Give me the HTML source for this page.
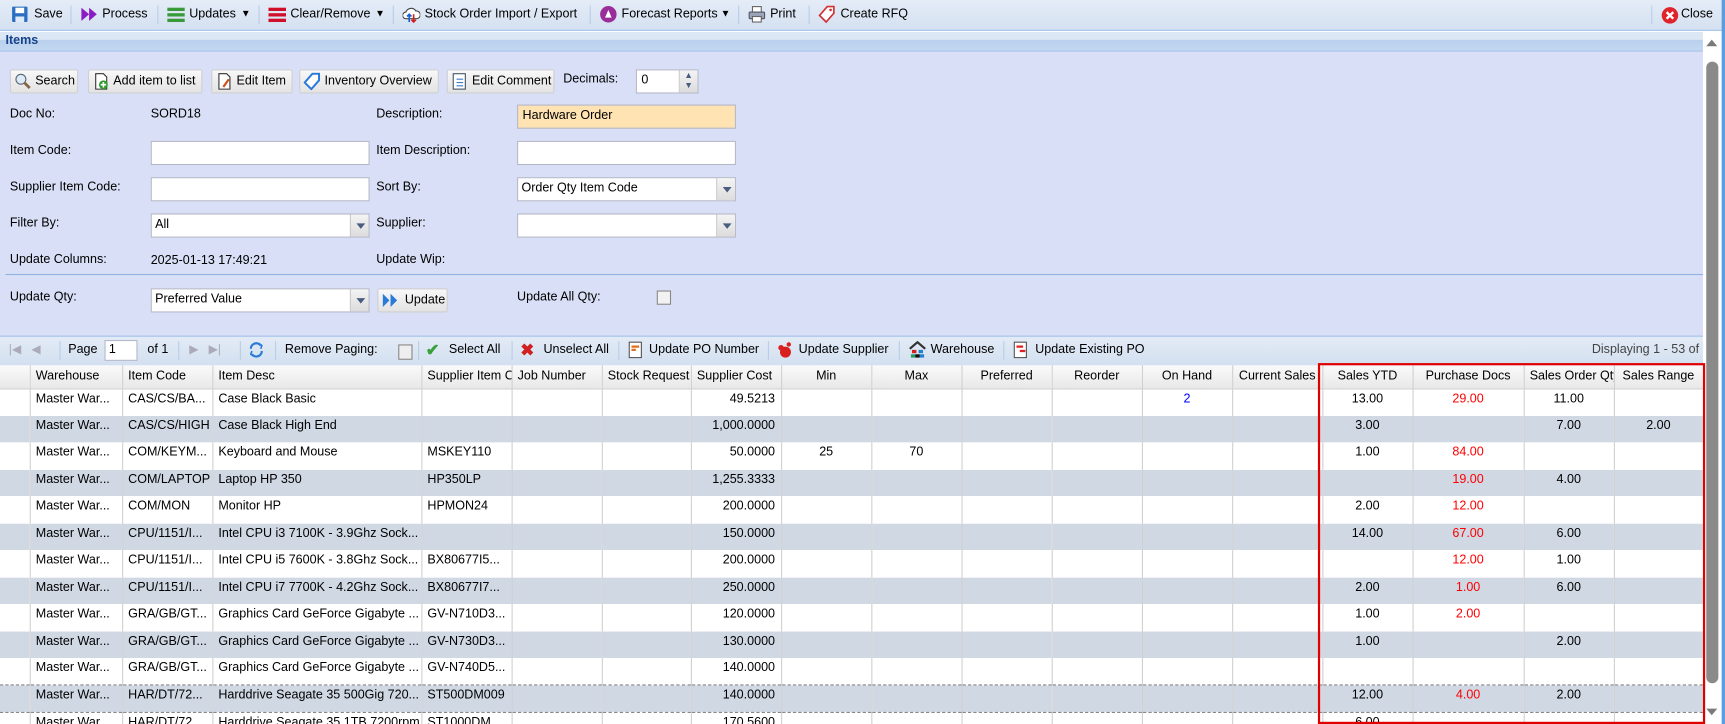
<!DOCTYPE html>
<html><head><meta charset="utf-8">
<style>
*{box-sizing:border-box;margin:0;padding:0}
html,body{width:1725px;height:724px;overflow:hidden;background:#fff}
#w{position:absolute;left:0;top:0;width:1568px;height:658px;transform:scale(1.1001,1.1003);transform-origin:0 0;font-family:"Liberation Sans",Tahoma,sans-serif;font-size:11.4px;color:#000;overflow:hidden}
.a{position:absolute;white-space:nowrap}
.tb{left:0;top:0;width:1568px;height:28px;background:linear-gradient(#e4ecf7,#d5e1f1);border-bottom:1px solid #99bbe8}
.sep{position:absolute;top:5px;width:1px;height:17px;background:#b8cde8}
.ic{position:absolute;width:16px;height:16px}
.ih{left:0;top:29px;width:1548px;height:18px;background:linear-gradient(#dce7f5 0,#dce7f5 40%,#b9d0ee 45%,#c3d7f0 100%);border-bottom:1px solid #99bbe8;font-weight:bold;color:#15428b;padding:2px 5px}
.fm{left:0;top:47px;width:1548px;height:258px;background:#d9dff6}
.btn{position:absolute;top:63px;height:22px;background:linear-gradient(#f8f8f8,#e3e3e3);border:1px solid #d0d0d0;border-radius:2px;padding:4px 0 0 22px;white-space:nowrap;overflow:hidden}
.lb{position:absolute;left:9px}
.in{position:absolute;height:22px;background:#fff;border:1px solid #b5b8c8;white-space:nowrap}
.dd{position:absolute;right:0;top:0;width:17px;height:20px;background:linear-gradient(#f4f4f4,#dcdcdc);border-left:1px solid #c8c8c8}
.dd:after{content:"";position:absolute;left:5px;top:8px;border:4px solid transparent;border-top:5px solid #4a5c80;border-bottom:0}
.pg{left:0;top:305px;width:1548px;height:27px;background:linear-gradient(#e3ebf6,#d3e0f0);border-top:1px solid #99bbe8}
table{position:absolute;left:0;top:332px;border-collapse:collapse;table-layout:fixed;width:1548px}
th{height:21px;font-weight:normal;background:linear-gradient(#fafafa,#e8e8e8);border-right:1px solid #d0d0d0;border-bottom:1px solid #d0d0d0;text-align:left;padding:0 5px;overflow:hidden;white-space:nowrap}
td{height:24.5px;vertical-align:top;padding:3px 5px 0;border-right:1px solid #d0d0d0;overflow:hidden;white-space:nowrap}
tr.g td{background:#d0d8e4}
tr.s td{border-top:1px dashed #888;border-bottom:1px dashed #888}
.r{text-align:right}.c{text-align:center}.red{color:#f00}.blu{color:#00f}
.sb{left:1548px;top:29px;width:17px;height:629px;background:#fff}
</style></head><body><div id="w">
<div class="a tb"></div>
<svg class="ic" style="left:10px;top:5px" viewBox="0 0 16 16"><rect x="1" y="1" width="14" height="14" rx="1" fill="#2b6fc2"/><rect x="4" y="2" width="8" height="5" fill="#fff"/><rect x="4" y="10" width="8" height="5" fill="#dfe9f7"/></svg>
<div class="a" style="left:31px;top:7px">Save</div><div class="sep" style="left:64px"></div>
<svg class="ic" style="left:73px;top:5px" viewBox="0 0 16 16"><path d="M1 2l7 6-7 6zM8 2l7 6-7 6z" fill="#8a1cc4"/></svg>
<div class="a" style="left:93px;top:7px">Process</div><div class="sep" style="left:143px"></div>
<svg class="ic" style="left:152px;top:5px" viewBox="0 0 16 16"><rect x="0" y="2" width="16" height="3" fill="#3a9a3a"/><rect x="0" y="7" width="16" height="3" fill="#3a9a3a"/><rect x="0" y="12" width="16" height="3" fill="#3a9a3a"/></svg>
<div class="a" style="left:172px;top:7px">Updates</div><div class="a" style="left:219px;top:7px;font-size:9px">▼</div><div class="sep" style="left:235px"></div>
<svg class="ic" style="left:244px;top:5px" viewBox="0 0 16 16"><rect x="0" y="2" width="16" height="3" fill="#d0102a"/><rect x="0" y="7" width="16" height="3" fill="#d0102a"/><rect x="0" y="12" width="16" height="3" fill="#d0102a"/></svg>
<div class="a" style="left:264px;top:7px">Clear/Remove</div><div class="a" style="left:341px;top:7px;font-size:9px">▼</div><div class="sep" style="left:357px"></div>
<svg class="ic" style="left:366px;top:5px" viewBox="0 0 16 16"><path d="M3 12a3 3 0 0 1 0-6a5 5 0 0 1 9-1a3.5 3.5 0 0 1 1 7z" fill="#fff" stroke="#444"/><path d="M6 15V8M4 10l2-2 2 2" stroke="#1a5fd0" fill="none" stroke-width="1.5"/><path d="M10 8v7M8 13l2 2 2-2" stroke="#d02020" fill="none" stroke-width="1.5"/></svg>
<div class="a" style="left:386px;top:7px">Stock Order Import / Export</div><div class="sep" style="left:536px"></div>
<svg class="ic" style="left:545px;top:5px" viewBox="0 0 16 16"><circle cx="8" cy="8" r="7.5" fill="#9b2d9b"/><path d="M8 4l3 7H5z" fill="#fff"/></svg>
<div class="a" style="left:565px;top:7px">Forecast Reports</div><div class="a" style="left:655px;top:7px;font-size:9px">▼</div><div class="sep" style="left:671px"></div>
<svg class="ic" style="left:680px;top:5px" viewBox="0 0 16 16"><rect x="4" y="1" width="8" height="5" fill="#fff" stroke="#666"/><rect x="1" y="6" width="14" height="6" rx="1" fill="#9aa6b8" stroke="#556"/><rect x="4" y="10" width="8" height="5" fill="#fff" stroke="#666"/></svg>
<div class="a" style="left:700px;top:7px">Print</div><div class="sep" style="left:735px"></div>
<svg class="ic" style="left:744px;top:5px" viewBox="0 0 16 16"><path d="M8 1h6v6l-7 8-6-6z" fill="#fff" stroke="#d03030" stroke-width="1.5"/><circle cx="11" cy="4" r="1.2" fill="#d03030"/></svg>
<div class="a" style="left:764px;top:7px">Create RFQ</div>
<div class="sep" style="left:1501px"></div>
<svg class="ic" style="left:1510px;top:6px" viewBox="0 0 16 16"><circle cx="8" cy="8" r="7.5" fill="#e0242c"/><path d="M5 5l6 6M11 5l-6 6" stroke="#fff" stroke-width="2.2"/></svg>
<div class="a" style="left:1528px;top:7px">Close</div>
<div class="a ih">Items</div>
<div class="a sb"><div class="a" style="left:3px;top:7px;border:5px solid transparent;border-bottom:6px solid #7a7a7a;border-top:0"></div><div class="a" style="left:3px;top:27px;width:11px;height:565px;background:#8a8a8a;border-radius:6px"></div><div class="a" style="left:3px;top:615px;border:5px solid transparent;border-top:6px solid #7a7a7a;border-bottom:0"></div></div>
<div class="a" style="left:1565px;top:0;width:3px;height:658px;background:#5b9be0"></div>
<div class="a fm"></div>
<div class="btn" style="left:9px;width:62px"><svg class="ic" style="left:3px;top:2px" viewBox="0 0 16 16"><circle cx="6" cy="6" r="4.5" fill="#dfeaf7" stroke="#567"/><path d="M9 9l5 5" stroke="#864" stroke-width="2.5"/></svg>Search</div>
<div class="btn" style="left:80px;width:104px"><svg class="ic" style="left:3px;top:2px" viewBox="0 0 16 16"><path d="M3 1h7l3 3v11H3z" fill="#fff" stroke="#333"/><circle cx="10" cy="11" r="4" fill="#2a9a2a"/><path d="M10 8.5v5M7.5 11h5" stroke="#fff" stroke-width="1.5"/></svg>Add item to list</div>
<div class="btn" style="left:192px;width:74px"><svg class="ic" style="left:3px;top:2px" viewBox="0 0 16 16"><path d="M3 1h7l3 3v11H3z" fill="#fff" stroke="#333"/><path d="M12 6l-5 7" stroke="#d05020" stroke-width="2"/></svg>Edit Item</div>
<div class="btn" style="left:272px;width:127px"><svg class="ic" style="left:3px;top:2px" viewBox="0 0 16 16"><path d="M8 1h6v6l-7 8-6-6z" fill="#fff" stroke="#2a7ad8" stroke-width="1.8"/></svg>Inventory Overview</div>
<div class="btn" style="left:406px;width:98px"><svg class="ic" style="left:3px;top:2px" viewBox="0 0 16 16"><rect x="2" y="1" width="11" height="14" fill="#fff" stroke="#456"/><path d="M5 6h6M5 9h6M5 12h6" stroke="#3a7ad0"/></svg>Edit Comment</div>
<div class="a" style="left:512px;top:66px">Decimals:</div>
<div class="in" style="left:578px;top:63px;width:57px;padding:3px 4px">0<div class="a" style="left:38px;top:0;width:17px;height:20px;background:linear-gradient(#f4f4f4,#dcdcdc);border-left:1px solid #ccc;font-size:8px;color:#4a5c80;line-height:9px;text-align:center">▲<br>▼</div></div>
<div class="lb a" style="top:98px">Doc No:</div><div class="a" style="left:137px;top:98px">SORD18</div>
<div class="a" style="left:342px;top:98px">Description:</div>
<div class="in" style="left:470px;top:95px;width:199px;background:#ffe3b3;padding:3px 4px">Hardware Order</div>
<div class="lb a" style="top:131px">Item Code:</div><div class="in" style="left:137px;top:128px;width:199px"></div>
<div class="a" style="left:342px;top:131px">Item Description:</div><div class="in" style="left:470px;top:128px;width:199px"></div>
<div class="lb a" style="top:164px">Supplier Item Code:</div><div class="in" style="left:137px;top:161px;width:199px"></div>
<div class="a" style="left:342px;top:164px">Sort By:</div><div class="in" style="left:470px;top:161px;width:199px;padding:3px 3px">Order Qty Item Code<div class="dd"></div></div>
<div class="lb a" style="top:197px">Filter By:</div><div class="in" style="left:137px;top:194px;width:199px;padding:3px 3px">All<div class="dd"></div></div>
<div class="a" style="left:342px;top:197px">Supplier:</div><div class="in" style="left:470px;top:194px;width:199px"><div class="dd"></div></div>
<div class="lb a" style="top:230px">Update Columns:</div><div class="a" style="left:137px;top:231px">2025-01-13 17:49:21</div>
<div class="a" style="left:342px;top:230px">Update Wip:</div>
<div class="a" style="left:5px;top:249px;width:1543px;height:1px;background:#8fb4e3"></div>
<div class="lb a" style="top:264px">Update Qty:</div><div class="in" style="left:137px;top:262px;width:199px;padding:3px 3px">Preferred Value<div class="dd"></div></div>
<div class="btn" style="left:343px;top:262px;width:64px;padding-left:24px"><svg class="ic" style="left:3px;top:2px" viewBox="0 0 16 16"><path d="M1 2l6 6-6 6zM8 2l6 6-6 6z" fill="#2a7ad8"/></svg>Update</div>
<div class="a" style="left:470px;top:264px">Update All Qty:</div>
<div class="a" style="left:597px;top:264px;width:13px;height:13px;background:#f2f2f2;border:1px solid #888"></div>
<div class="a pg"></div>
<div class="a" style="left:8px;top:311px;color:#aab;font-size:11px">|◀ &nbsp;&nbsp;◀</div>
<div class="sep" style="left:54px;top:310px"></div>
<div class="a" style="left:62px;top:312px">Page</div>
<div class="in" style="left:95px;top:309px;width:30px;height:19px;padding:2px 3px">1</div>
<div class="a" style="left:134px;top:312px">of 1</div>
<div class="sep" style="left:162px;top:310px"></div>
<div class="a" style="left:172px;top:311px;color:#aab;font-size:11px">▶ &nbsp;&nbsp;▶|</div>
<div class="sep" style="left:218px;top:310px"></div>
<svg class="ic" style="left:225px;top:310px" viewBox="0 0 16 16"><path d="M3 7a5 5 0 0 1 9-3M13 9a5 5 0 0 1-9 3" stroke="#2a7ad8" stroke-width="2" fill="none"/><path d="M10 2l3 2-1 3M6 14l-3-2 1-3" stroke="#2a7ad8" stroke-width="1.5" fill="none"/></svg>
<div class="sep" style="left:250px;top:310px"></div>
<div class="a" style="left:259px;top:312px">Remove Paging:</div>
<div class="a" style="left:362px;top:313px;width:13px;height:14px;background:#eee;border:1px solid #888"></div>
<div class="sep" style="left:380px;top:310px"></div>
<div class="a" style="left:387px;top:309px;color:#3aa03a;font-size:15px;font-weight:bold">✔</div><div class="a" style="left:408px;top:312px">Select All</div>
<div class="sep" style="left:465px;top:310px"></div>
<div class="a" style="left:473px;top:309px;color:#d02020;font-size:15px;font-weight:bold">✖</div><div class="a" style="left:494px;top:312px">Unselect All</div>
<div class="sep" style="left:562px;top:310px"></div>
<svg class="ic" style="left:570px;top:310px" viewBox="0 0 16 16"><rect x="2" y="1" width="11" height="14" fill="#fff" stroke="#555"/><path d="M4 5h7M4 8h4" stroke="#e07020" stroke-width="2"/></svg><div class="a" style="left:590px;top:312px">Update PO Number</div>
<div class="sep" style="left:698px;top:310px"></div>
<svg class="ic" style="left:706px;top:310px" viewBox="0 0 16 16"><circle cx="8" cy="10" r="5" fill="#d82020"/><circle cx="4" cy="6" r="2.5" fill="#d82020"/><circle cx="11" cy="3" r="2" fill="#d82020"/></svg><div class="a" style="left:726px;top:312px">Update Supplier</div>
<div class="sep" style="left:817px;top:310px"></div>
<svg class="ic" style="left:826px;top:310px" viewBox="0 0 16 16"><path d="M1 7l7-6 7 6" stroke="#333" stroke-width="2" fill="none"/><rect x="3" y="8" width="4" height="3" fill="#d02020"/><rect x="9" y="8" width="4" height="3" fill="#2080d0"/><rect x="2" y="12" width="4" height="3" fill="#20a060"/><rect x="10" y="12" width="4" height="3" fill="#2080d0"/><rect x="6" y="12" width="4" height="3" fill="#111"/></svg><div class="a" style="left:846px;top:312px">Warehouse</div>
<div class="sep" style="left:912px;top:310px"></div>
<svg class="ic" style="left:920px;top:310px" viewBox="0 0 16 16"><rect x="2" y="1" width="11" height="14" fill="#fff" stroke="#555"/><path d="M4 5h6M7 9h5" stroke="#e02020" stroke-width="2"/></svg><div class="a" style="left:941px;top:312px">Update Existing PO</div>
<div class="a" style="left:1447px;top:312px;color:#444">Displaying 1 - 53 of</div>
<table>
<colgroup><col style="width:27px"><col style="width:84px"><col style="width:82px"><col style="width:190px"><col style="width:82px"><col style="width:82px"><col style="width:81px"><col style="width:82px"><col style="width:82px"><col style="width:82px"><col style="width:82px"><col style="width:82px"><col style="width:82px"><col style="width:82px"><col style="width:82px"><col style="width:101px"><col style="width:82px"><col style="width:81px"></colgroup>
<tr><th></th><th>Warehouse</th><th>Item Code</th><th>Item Desc</th><th>Supplier Item Code</th><th>Job Number</th><th>Stock Request Qty</th><th>Supplier Cost</th><th class="c">Min</th><th class="c">Max</th><th class="c">Preferred</th><th class="c">Reorder</th><th class="c">On Hand</th><th class="c">Current Sales</th><th class="c">Sales YTD</th><th class="c">Purchase Docs</th><th class="c">Sales Order Qty</th><th class="c">Sales Range</th></tr>
<tr><td></td><td>Master War...</td><td>CAS/CS/BA...</td><td>Case Black Basic</td><td></td><td></td><td></td><td class="r">49.5213</td><td></td><td></td><td></td><td></td><td class="c blu">2</td><td></td><td class="c">13.00</td><td class="c red">29.00</td><td class="c">11.00</td><td></td></tr>
<tr class="g"><td></td><td>Master War...</td><td>CAS/CS/HIGH</td><td>Case Black High End</td><td></td><td></td><td></td><td class="r">1,000.0000</td><td></td><td></td><td></td><td></td><td></td><td></td><td class="c">3.00</td><td></td><td class="c">7.00</td><td class="c">2.00</td></tr>
<tr><td></td><td>Master War...</td><td>COM/KEYM...</td><td>Keyboard and Mouse</td><td>MSKEY110</td><td></td><td></td><td class="r">50.0000</td><td class="c">25</td><td class="c">70</td><td></td><td></td><td></td><td></td><td class="c">1.00</td><td class="c red">84.00</td><td></td><td></td></tr>
<tr class="g"><td></td><td>Master War...</td><td>COM/LAPTOP</td><td>Laptop HP 350</td><td>HP350LP</td><td></td><td></td><td class="r">1,255.3333</td><td></td><td></td><td></td><td></td><td></td><td></td><td></td><td class="c red">19.00</td><td class="c">4.00</td><td></td></tr>
<tr><td></td><td>Master War...</td><td>COM/MON</td><td>Monitor HP</td><td>HPMON24</td><td></td><td></td><td class="r">200.0000</td><td></td><td></td><td></td><td></td><td></td><td></td><td class="c">2.00</td><td class="c red">12.00</td><td></td><td></td></tr>
<tr class="g"><td></td><td>Master War...</td><td>CPU/1151/I...</td><td>Intel CPU i3 7100K - 3.9Ghz Sock...</td><td></td><td></td><td></td><td class="r">150.0000</td><td></td><td></td><td></td><td></td><td></td><td></td><td class="c">14.00</td><td class="c red">67.00</td><td class="c">6.00</td><td></td></tr>
<tr><td></td><td>Master War...</td><td>CPU/1151/I...</td><td>Intel CPU i5 7600K - 3.8Ghz Sock...</td><td>BX80677I5...</td><td></td><td></td><td class="r">200.0000</td><td></td><td></td><td></td><td></td><td></td><td></td><td></td><td class="c red">12.00</td><td class="c">1.00</td><td></td></tr>
<tr class="g"><td></td><td>Master War...</td><td>CPU/1151/I...</td><td>Intel CPU i7 7700K - 4.2Ghz Sock...</td><td>BX80677I7...</td><td></td><td></td><td class="r">250.0000</td><td></td><td></td><td></td><td></td><td></td><td></td><td class="c">2.00</td><td class="c red">1.00</td><td class="c">6.00</td><td></td></tr>
<tr><td></td><td>Master War...</td><td>GRA/GB/GT...</td><td>Graphics Card GeForce Gigabyte ...</td><td>GV-N710D3...</td><td></td><td></td><td class="r">120.0000</td><td></td><td></td><td></td><td></td><td></td><td></td><td class="c">1.00</td><td class="c red">2.00</td><td></td><td></td></tr>
<tr class="g"><td></td><td>Master War...</td><td>GRA/GB/GT...</td><td>Graphics Card GeForce Gigabyte ...</td><td>GV-N730D3...</td><td></td><td></td><td class="r">130.0000</td><td></td><td></td><td></td><td></td><td></td><td></td><td class="c">1.00</td><td></td><td class="c">2.00</td><td></td></tr>
<tr><td></td><td>Master War...</td><td>GRA/GB/GT...</td><td>Graphics Card GeForce Gigabyte ...</td><td>GV-N740D5...</td><td></td><td></td><td class="r">140.0000</td><td></td><td></td><td></td><td></td><td></td><td></td><td></td><td></td><td></td><td></td></tr>
<tr class="g s"><td></td><td>Master War...</td><td>HAR/DT/72...</td><td>Harddrive Seagate 35 500Gig 720...</td><td>ST500DM009</td><td></td><td></td><td class="r">140.0000</td><td></td><td></td><td></td><td></td><td></td><td></td><td class="c">12.00</td><td class="c red">4.00</td><td class="c">2.00</td><td></td></tr>
<tr><td></td><td>Master War...</td><td>HAR/DT/72...</td><td>Harddrive Seagate 35 1TB 7200rpm</td><td>ST1000DM...</td><td></td><td></td><td class="r">170.5600</td><td></td><td></td><td></td><td></td><td></td><td></td><td class="c">6.00</td><td></td><td></td><td></td></tr>
</table>
<div class="a" style="left:1198px;top:330px;width:352px;height:328px;border:2px solid #e00000"></div>
</div></body></html>
